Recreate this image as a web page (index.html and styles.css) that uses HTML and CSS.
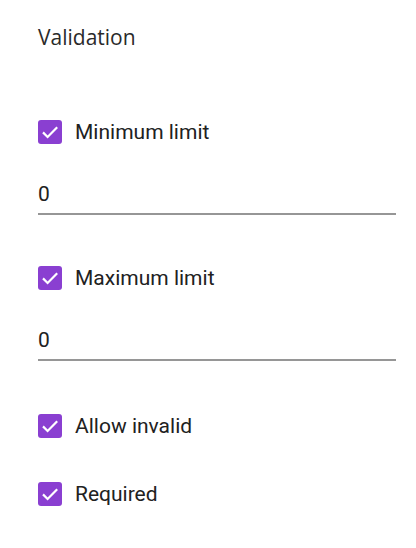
FILE: index.html
```html
<!DOCTYPE html>
<html>
<head>
<meta charset="utf-8">
<link rel="stylesheet" href="styles.css">
</head>
<body>
<div class="panel">
  <div class="title">Validation</div>

  <div class="check-row first">
    <span class="box"><svg viewBox="0 0 24 24"><path d="M5,12.4 9.6,17 19.2,7.2"/></svg></span>
    <span class="label">Minimum limit</span>
  </div>
  <div class="field"><span class="value">0</span></div>

  <div class="check-row after-field">
    <span class="box"><svg viewBox="0 0 24 24"><path d="M5,12.4 9.6,17 19.2,7.2"/></svg></span>
    <span class="label">Maximum limit</span>
  </div>
  <div class="field"><span class="value">0</span></div>

  <div class="check-row after-field2">
    <span class="box"><svg viewBox="0 0 24 24"><path d="M5,12.4 9.6,17 19.2,7.2"/></svg></span>
    <span class="label">Allow invalid</span>
  </div>

  <div class="check-row next">
    <span class="box"><svg viewBox="0 0 24 24"><path d="M5,12.4 9.6,17 19.2,7.2"/></svg></span>
    <span class="label">Required</span>
  </div>
</div>
</body>
</html>
```

FILE: styles.css
```css
html, body {
  margin: 0;
  padding: 0;
  background: #ffffff;
}

.panel {
  width: 358px;
  padding: 0 0 0 38px;
  display: flex;
  flex-direction: column;
}

.title {
  font-family: "Open Sans", sans-serif;
  font-size: 21px;
  line-height: 28px;
  color: #2a2a2a;
  margin-top: 23px;
}

.check-row {
  display: flex;
  align-items: center;
  height: 24px;
  gap: 13px;
}

.check-row.first { margin-top: 69px; }
.check-row.after-field { margin-top: 51px; }
.check-row.after-field2 { margin-top: 53px; }
.check-row.next { margin-top: 44px; }

.box {
  width: 24px;
  height: 24px;
  border-radius: 3px;
  background: #8a3fd1;
  display: flex;
  align-items: center;
  justify-content: center;
  flex: none;
}

.box svg {
  width: 24px;
  height: 24px;
  fill: none;
  stroke: #ffffff;
  stroke-width: 2.2;
}

.label {
  font-family: Roboto, sans-serif;
  font-size: 21px;
  color: #212121;
  line-height: 24px;
}

.field {
  margin-top: 38px;
  border-bottom: 2px solid #969696;
  padding-bottom: 7px;
}

.value {
  font-family: Roboto, sans-serif;
  font-size: 21px;
  line-height: 24px;
  color: #212121;
  display: block;
}
```
